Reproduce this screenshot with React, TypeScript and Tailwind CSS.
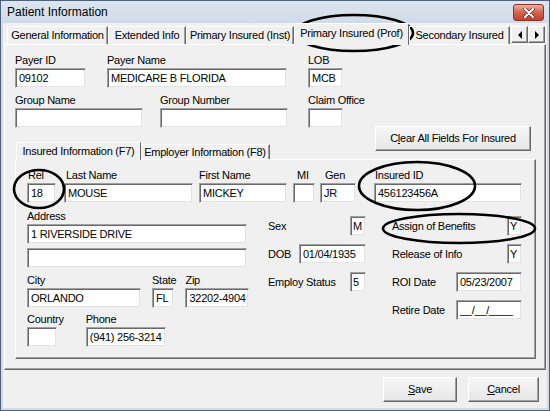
import React from 'react';

type FieldProps = { value?: string; className?: string };

// sunken edit box, classic windows look
const Field = ({ value = '', className = '' }: FieldProps) => (
  <div
    className={`h-[20px] bg-white border border-t-[#a0a0a0] border-l-[#a0a0a0] border-r-[#f0f0f0] border-b-[#f0f0f0] shadow-[inset_1px_1px_0_#696969,inset_-1px_-1px_0_#e3e3e3] pl-[3px] pt-[2px] leading-[15px] whitespace-nowrap overflow-hidden ${className}`}
  >
    {value}
  </div>
);

const Label = ({ children, className = '' }: { children: React.ReactNode; className?: string }) => (
  <div className={`h-[13px] leading-[13px] mb-[1px] whitespace-nowrap ${className}`}>{children}</div>
);

const Btn = ({ children, className = '' }: { children: React.ReactNode; className?: string }) => (
  <button
    className={`h-[25px] flex items-center justify-center bg-gradient-to-b from-[#f7f7f7] to-[#e6e6e6] border border-t-white border-l-white border-r-[#696969] border-b-[#696969] shadow-[inset_-1px_-1px_0_#a0a0a0] whitespace-nowrap ${className}`}
  >
    {children}
  </button>
);

const raised =
  'border border-t-white border-l-white border-r-[#696969] border-b-[#696969] shadow-[inset_-1px_-1px_0_#a0a0a0]';

const outerTabs = [
  { label: 'General Information', w: 'w-[101px]' },
  { label: 'Extended Info', w: 'w-[78px]' },
  { label: 'Primary Insured (Inst)', w: 'w-[108px]' },
  { label: 'Primary Insured (Prof)', w: 'w-[115px]', active: true },
  { label: 'Secondary Insured', w: 'w-[101px]' },
];

const Arrow = ({ dir }: { dir: 'l' | 'r' }) => (
  <div className={`w-[17px] h-[17px] flex items-center justify-center bg-[#f0f0f0] ${raised}`}>
    <svg width="6" height="8" viewBox="0 0 6 8">
      {dir === 'l' ? <path d="M5 0v8L1 4z" fill="#000" /> : <path d="M1 0v8l4-4z" fill="#000" />}
    </svg>
  </div>
);

export default function App() {
  return (
    <div className="relative w-[550px] h-[411px] overflow-hidden bg-[#cfdbe8] border border-[#4e6177] flex flex-col font-['Liberation_Sans',Arial,sans-serif] text-[11px] tracking-[-0.25px] text-black">
      {/* title bar */}
      <div className="h-[22px] flex items-start bg-gradient-to-b from-[#dde6f0] to-[#cfdbe8] pl-[6px] pr-[5px]">
        <div className="text-[12px] leading-[23px] tracking-normal">Patient Information</div>
        <div className="ml-auto mt-[3px] w-[31px] h-[17px] rounded-[3px] border border-[#8a3326] bg-gradient-to-b from-[#eab0a2] via-[#d2624f] to-[#c0432f] flex items-center justify-center">
          <svg width="12" height="10" viewBox="0 0 12 10">
            <path d="M2 1l8 8M10 1L2 9" stroke="#5a1a10" strokeWidth="3.4" strokeLinecap="round" />
            <path d="M2 1l8 8M10 1L2 9" stroke="#fff" strokeWidth="2.2" strokeLinecap="round" />
          </svg>
        </div>
      </div>

      {/* client area */}
      <div className="flex-1 mx-[2px] mb-[2px] bg-[#f0f0f0] flex flex-col">
        {/* tab strip */}
        <div className="relative z-10 h-[22px] -mb-px flex items-end pl-[4px] pr-[2px]">
          {outerTabs.map((t) =>
            t.active ? (
              <div
                key={t.label}
                className={`${t.w} h-[22px] bg-[#f0f0f0] border-t border-l border-t-white border-l-white border-r border-r-[#696969] rounded-t-[2px] flex items-center justify-center pb-[2px] whitespace-nowrap`}
              >
                {t.label}
              </div>
            ) : (
              <div
                key={t.label}
                className={`${t.w} h-[18px] mb-px border-t border-l border-t-white border-l-white border-r border-r-[#696969] shadow-[inset_-1px_0_0_#a0a0a0] flex items-center justify-center whitespace-nowrap`}
              >
                {t.label}
              </div>
            )
          )}
          <div className="ml-auto mb-[2px] flex">
            <Arrow dir="l" />
            <Arrow dir="r" />
          </div>
        </div>

        {/* outer tab page */}
        <div className={`mx-[1px] h-[326px] ${raised} pl-[10px] pr-[9px] pt-[9px] flex flex-col`}>
          <div className="flex gap-[21px]">
            <div>
              <Label>Payer ID</Label>
              <Field value="09102" className="w-[71px]" />
            </div>
            <div>
              <Label>Payer Name</Label>
              <Field value="MEDICARE B FLORIDA" className="w-[180px]" />
            </div>
            <div>
              <Label>LOB</Label>
              <Field value="MCB" className="w-[35px]" />
            </div>
          </div>

          <div className="flex mt-[6px]">
            <div>
              <Label>Group Name</Label>
              <Field className="w-[128px]" />
            </div>
            <div className="ml-[17px]">
              <Label>Group Number</Label>
              <Field className="w-[128px]" />
            </div>
            <div className="ml-[20px]">
              <Label>Claim Office</Label>
              <Field className="w-[35px]" />
            </div>
          </div>

          {/* inner tabs + clear button */}
          <div className="relative z-10 -mt-[2px] h-[34px] -mb-px flex items-end justify-between">
            <div className="flex items-end">
              <div className="ml-px w-[125px] h-[18px] bg-[#f0f0f0] border-t border-l border-t-white border-l-white border-r border-r-[#696969] flex items-center justify-center pb-px whitespace-nowrap">
                Insured Information (F7)
              </div>
              <div className="w-[129px] h-[15px] mb-px border-t border-t-white border-r border-r-[#696969] shadow-[inset_-1px_0_0_#a0a0a0] flex items-center justify-center whitespace-nowrap">
                Employer Information (F8)
              </div>
            </div>
            <Btn className="self-start w-[156px] mr-[5px]">
              <span>
                C<span className="underline">l</span>ear All Fields For Insured
              </span>
            </Btn>
          </div>

          {/* inner tab page */}
          <div className={`h-[200px] ${raised} pl-[11px] pt-[9px] flex flex-col`}>
            <div className="flex">
              <div>
                <Label className="pl-[1px]">Rel</Label>
                <Field value="18" className="w-[29px]" />
              </div>
              <div className="ml-[8px]">
                <Label className="pl-[2px]">Last Name</Label>
                <Field value="MOUSE" className="w-[129px]" />
              </div>
              <div className="ml-[6px]">
                <Label>First Name</Label>
                <Field value="MICKEY" className="w-[88px]" />
              </div>
              <div className="ml-[6px]">
                <Label className="pl-[4px]">MI</Label>
                <Field className="w-[22px]" />
              </div>
              <div className="ml-[5px]">
                <Label className="pl-[5px]">Gen</Label>
                <Field value="JR" className="w-[36px]" />
              </div>
              <div className="ml-[18px]">
                <Label className="pl-[1px]">Insured ID</Label>
                <Field value="456123456A" className="w-[148px]" />
              </div>
            </div>

            <div className="flex mt-[7px]">
              {/* address block */}
              <div className="w-[220px]">
                <Label>Address</Label>
                <Field value="1 RIVERSIDE DRIVE" className="w-[220px]" />
                <Field className="w-[220px] mt-[4px]" />
                <div className="flex mt-[6px]">
                  <div>
                    <Label>City</Label>
                    <Field value="ORLANDO" className="w-[114px]" />
                  </div>
                  <div className="ml-[11px]">
                    <Label>State</Label>
                    <Field value="FL" className="w-[22px]" />
                  </div>
                  <div className="ml-[9px]">
                    <Label>Zip</Label>
                    <Field value="32202-4904" className="w-[64px]" />
                  </div>
                </div>
                <div className="flex mt-[5px]">
                  <div>
                    <Label>Country</Label>
                    <Field className="w-[30px]" />
                  </div>
                  <div className="ml-[22px]">
                    <Label>Phone</Label>
                    <Field value="(941) 256-3214" className="w-[80px]" />
                  </div>
                </div>
              </div>

              {/* sex / dob / employ */}
              <div className="ml-[21px] w-[98px] mt-[6px] flex flex-col gap-[8px]">
                <div className="flex items-center justify-between">
                  <span>Sex</span>
                  <Field value="M" className="w-[16px] !pl-[2px]" />
                </div>
                <div className="flex items-center justify-between">
                  <span>DOB</span>
                  <Field value="01/04/1935" className="w-[67px]" />
                </div>
                <div className="flex items-center justify-between">
                  <span>Employ Status</span>
                  <Field value="5" className="w-[16px] !pl-[2px]" />
                </div>
              </div>

              {/* benefits / dates */}
              <div className="ml-[26px] w-[130px] mt-[6px] flex flex-col gap-[8px]">
                <div className="flex items-center justify-between">
                  <span>Assign of Benefits</span>
                  <Field value="Y" className="w-[15px] !pl-[2px]" />
                </div>
                <div className="flex items-center justify-between">
                  <span>Release of Info</span>
                  <Field value="Y" className="w-[15px] !pl-[2px]" />
                </div>
                <div className="flex items-center justify-between">
                  <span>ROI Date</span>
                  <Field value="05/23/2007" className="w-[66px]" />
                </div>
                <div className="flex items-center justify-between">
                  <span>Retire Date</span>
                  <Field value="__/__/____" className="w-[66px]" />
                </div>
              </div>
            </div>
          </div>
        </div>

        {/* dialog buttons */}
        <div className="mt-[7px] flex justify-end gap-[11px] pr-[8px]">
          <Btn className="w-[74px]">
            <span>
              <span className="underline">S</span>ave
            </span>
          </Btn>
          <Btn className="w-[71px]">
            <span>
              <span className="underline">C</span>ancel
            </span>
          </Btn>
        </div>
      </div>

      {/* hand-drawn highlight ellipses */}
      <svg className="absolute inset-0 pointer-events-none" width="550" height="411" viewBox="0 0 550 411">
        <g fill="none" stroke="#000" strokeWidth="2.6">
          <ellipse cx="353" cy="32" rx="59" ry="18" />
          <ellipse cx="38" cy="188" rx="25" ry="19" />
          <ellipse cx="416" cy="185" rx="58" ry="24" />
          <ellipse cx="458" cy="227.5" rx="76" ry="14.5" />
        </g>
      </svg>
    </div>
  );
}
